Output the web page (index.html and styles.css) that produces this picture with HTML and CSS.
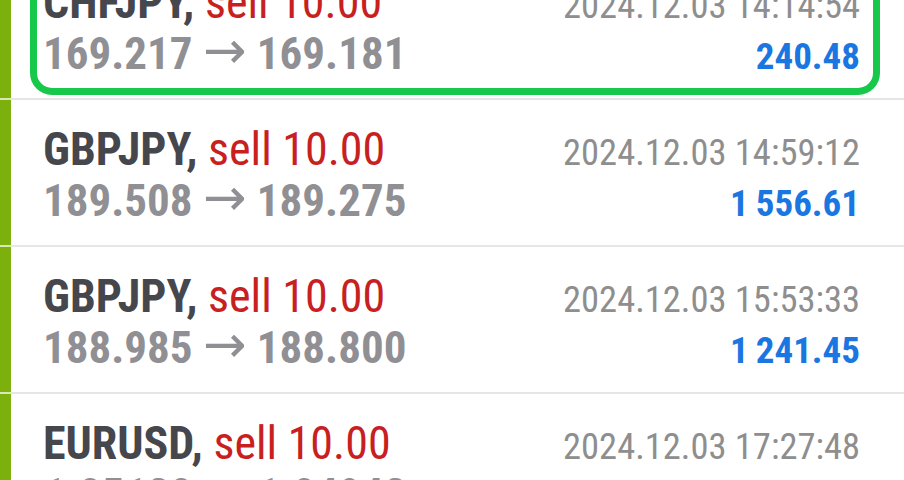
FILE: index.html
```html
<!DOCTYPE html>
<html lang="en">
<head>
    <meta charset="UTF-8">
    <title>History</title>
    <link rel="stylesheet" href="styles.css">
</head>
<body>
    <div class="deals">
        <div class="deal">
            <div class="line">
                <span class="title"><b>CHFJPY,</b> <span class="side">sell 10.00</span></span>
                <span class="time">2024.12.03 14:14:54</span>
            </div>
            <div class="line">
                <span class="prices">169.217 <span class="arrow">&rarr;</span> 169.181</span>
                <span class="profit">240.48</span>
            </div>
            <div class="highlight"></div>
        </div>
        <div class="sep"></div>
        <div class="deal">
            <div class="line">
                <span class="title"><b>GBPJPY,</b> <span class="side">sell 10.00</span></span>
                <span class="time">2024.12.03 14:59:12</span>
            </div>
            <div class="line">
                <span class="prices">189.508 <span class="arrow">&rarr;</span> 189.275</span>
                <span class="profit">1&#8201;556.61</span>
            </div>
        </div>
        <div class="sep"></div>
        <div class="deal">
            <div class="line">
                <span class="title"><b>GBPJPY,</b> <span class="side">sell 10.00</span></span>
                <span class="time">2024.12.03 15:53:33</span>
            </div>
            <div class="line">
                <span class="prices">188.985 <span class="arrow">&rarr;</span> 188.800</span>
                <span class="profit">1&#8201;241.45</span>
            </div>
        </div>
        <div class="sep"></div>
        <div class="deal">
            <div class="line">
                <span class="title"><b>EURUSD,</b> <span class="side">sell 10.00</span></span>
                <span class="time">2024.12.03 17:27:48</span>
            </div>
            <div class="line">
                <span class="prices">1.05120 <span class="arrow">&rarr;</span> 1.04942</span>
                <span class="profit">1&#8201;781.00</span>
            </div>
        </div>
    </div>
</body>
</html>
```

FILE: styles.css
```css
body {
    font-family: 'Roboto Condensed', Roboto, sans-serif;
    background: #fff;
    margin: 0;
    padding: 0;
    overflow: hidden;
}
.deals {
    margin-top: -47px;
}
.deal {
    position: relative;
    border-left: 11px solid #7cb00c;
    height: 145px;
    box-sizing: border-box;
    padding: 24px 44px 0 32px;
}
.sep {
    height: 2px;
    background: linear-gradient(to right, #d9e8b0 11px, #e6e6e6 11px);
}
.line {
    display: flex;
    justify-content: space-between;
    align-items: baseline;
    height: 51px;
    line-height: 51px;
    white-space: nowrap;
}
.title {
    font-size: 46px;
    color: #46464d;
}
.title b {
    font-weight: 700;
}
.side {
    color: #c8201f;
}
.time {
    font-size: 36.5px;
    color: #8e8e8e;
}
.prices {
    font-size: 45px;
    font-weight: 700;
    color: #8f8f94;
}
.arrow {
    font-family: 'DejaVu Sans', sans-serif;
    font-weight: 400;
    font-size: 52px;
    line-height: 40px;
    vertical-align: 1px;
}
.profit {
    font-size: 37px;
    font-weight: 700;
    color: #1a76e0;
}
.highlight {
    position: absolute;
    left: 19px;
    right: 24px;
    top: -40px;
    bottom: 3px;
    border: 7px solid #18c84a;
    border-radius: 22px;
}
```
